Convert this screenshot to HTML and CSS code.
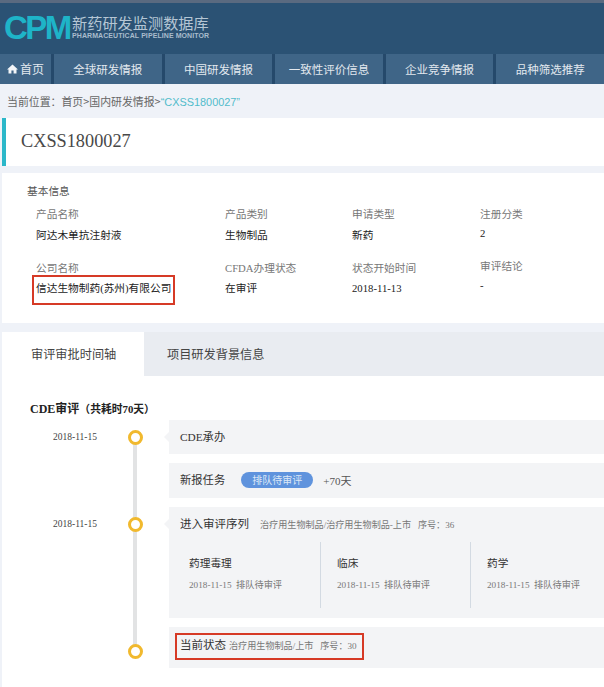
FILE: index.html
```html
<!DOCTYPE html>
<html lang="zh">
<head>
<meta charset="utf-8">
<title>CPM</title>
<link rel="stylesheet" href="styles.css">
</head>
<body>
<header class="brand">
  <span class="logo-mark">CPM</span>
  <div class="logo-text">
    <span class="logo-cn">新药研发监测数据库</span>
    <span class="logo-en">PHARMACEUTICAL PIPELINE MONITOR</span>
  </div>
</header>
<nav class="nav">
  <a class="nav-item nav-home"><svg class="home-icon" viewBox="0 0 12 11"><path d="M6 .5 0 6h1.6v4.500h3.200V7.200h2.400v3.300h3.200V6H12z"/></svg>首页</a>
  <a class="nav-item">全球研发情报</a>
  <a class="nav-item">中国研发情报</a>
  <a class="nav-item">一致性评价信息</a>
  <a class="nav-item">企业竞争情报</a>
  <a class="nav-item">品种筛选推荐</a>
</nav>
<div class="crumbs">当前位置：首页&gt;国内研发情报&gt;<span class="crumb-current">“CXSS1800027”</span></div>
<section class="title-card"><h1>CXSS1800027</h1></section>
<section class="info-card">
  <h2>基本信息</h2>
  <div class="info-grid">
    <div class="cell"><div class="label">产品名称</div><div class="value">阿达木单抗注射液</div></div>
    <div class="cell"><div class="label">产品类别</div><div class="value">生物制品</div></div>
    <div class="cell"><div class="label">申请类型</div><div class="value">新药</div></div>
    <div class="cell cell-tight"><div class="label">注册分类</div><div class="value">2</div></div>
    <div class="cell cell-low"><div class="label">公司名称</div><div class="value flagged">信达生物制药(苏州)有限公司</div></div>
    <div class="cell cell-low"><div class="label">CFDA办理状态</div><div class="value">在审评</div></div>
    <div class="cell cell-low"><div class="label">状态开始时间</div><div class="value">2018-11-13</div></div>
    <div class="cell cell-raised"><div class="label">审评结论</div><div class="value">-</div></div>
  </div>
</section>
<section class="panel">
  <div class="tabs">
    <div class="tab tab-active">审评审批时间轴</div>
    <div class="tab">项目研发背景信息</div>
  </div>
  <div class="timeline-wrap">
    <h3>CDE审评<small>（共耗时70天）</small></h3>
    <div class="timeline">
      <div class="axis"></div>
      <div class="row">
        <div class="date">2018-11-15</div><div class="dot"></div>
        <div class="card card-first notch"><span class="card-title">CDE承办</span></div>
      </div>
      <div class="row">
        <div class="card card-task"><span class="card-title">新报任务</span><span class="pill">排队待审评</span><span class="plus">+70天</span></div>
      </div>
      <div class="row">
        <div class="date">2018-11-15</div><div class="dot"></div>
        <div class="card card-queue notch">
          <div class="queue-head"><span class="card-title strong">进入审评序列</span><span class="meta">治疗用生物制品/治疗用生物制品-上市&nbsp;&nbsp;&nbsp;序号：36</span></div>
          <div class="tracks">
            <div class="track"><div class="track-name">药理毒理</div><div class="track-meta">2018-11-15&nbsp;&nbsp;排队待审评</div></div>
            <div class="track"><div class="track-name">临床</div><div class="track-meta">2018-11-15&nbsp;&nbsp;排队待审评</div></div>
            <div class="track"><div class="track-name">药学</div><div class="track-meta">2018-11-15&nbsp;&nbsp;排队待审评</div></div>
          </div>
        </div>
      </div>
      <div class="row">
        <div class="dot dot-last"></div>
        <div class="card card-now"><div class="now-box"><span class="card-title now-title">当前状态</span><span class="meta">治疗用生物制品/上市&nbsp;&nbsp;&nbsp;序号：30</span></div></div>
      </div>
    </div>
  </div>
</section>
</body>
</html>
```
FILE: styles.css
```css
* { box-sizing: border-box; }
html, body { margin: 0; height: 687px; overflow: hidden; }
body {
  background: #eff2f8;
  font-family: "Liberation Serif", "Noto Sans CJK SC", serif;
  color: #333;
}
.brand {
  height: 54px;
  padding: 10px 0 0 4px;
  border-top: 3px solid #5a6a80;
  background: #2b5274;
  display: flex;
  align-items: flex-start;
}
.logo-mark {
  margin-top: -1px;
  font: bold 33px/32px "Liberation Sans", sans-serif;
  letter-spacing: -2.600px;
  color: #1eb4c8;
  width: 68px;
  flex: none;
}
.logo-text { display: flex; flex-direction: column; }
.logo-cn {
  font: 15.200px/19px "Noto Sans CJK SC", sans-serif;
  color: #b5c6d4;
}
.logo-en {
  font: bold 7px/8px "Liberation Sans", sans-serif;
  letter-spacing: .08px;
  color: #a9bccc;
  white-space: nowrap;
}
.nav { height: 30px; background: #25496b; display: flex; gap: 3px; }
.nav-item {
  flex: 1;
  background: #3f6587;
  color: #e3e9ef;
  font: 11.500px/30px "Noto Sans CJK SC", sans-serif;
  text-align: center;
}
.nav-home {
  flex: 0 0 51px;
  display: flex;
  align-items: center;
  justify-content: center;
  gap: 2px;
  font-size: 12px;
}
.home-icon { width: 11px; height: 10px; fill: #f2f5f8; }
.crumbs {
  height: 34px;
  padding-left: 7px;
  font: 10.900px/34px "Noto Sans CJK SC", sans-serif;
  color: #666;
  white-space: nowrap;
}
.crumb-current { color: #52bccb; font-family: "Liberation Sans", "Noto Sans CJK SC", sans-serif; }
.title-card {
  height: 48px;
  margin-left: 2px;
  background: #fff;
  border-left: 4px solid #2bb7c9;
  padding-left: 15px;
}
.title-card h1 {
  margin: 0;
  font-size: 18.300px;
  font-weight: normal;
  line-height: 47px;
  color: #484848;
}
.info-card {
  height: 150px;
  margin: 7px 0 9px 2px;
  background: #fff;
  padding: 10px 0 0 25px;
}
.info-card h2 { margin: 0; font: 10.700px/16px "Noto Sans CJK SC", sans-serif; color: #555; }
.info-grid {
  display: grid;
  grid-template-columns: 189px 127px 128px 1fr;
  grid-auto-rows: 53px;
  margin: 7px 0 0 9px;
}
.label { height: 16px; font: 10.700px/16px "Liberation Serif", "Noto Sans CJK SC", serif; color: #777; }
.value { position: relative; height: 16px; margin-top: 5px; font: 10.700px/16px "Liberation Serif", "Noto Sans CJK SC", serif; color: #222; white-space: nowrap; }
.cell-tight .value { margin-top: 3px; }
.cell-low { padding-top: 1px; }
.cell-low .value { margin-top: 4px; }
.cell-raised { margin-top: -1px; }
.cell-raised .value { margin-top: 3px; }
.flagged::after {
  content: "";
  box-sizing: border-box;
  position: absolute;
  left: -4px;
  top: -5px;
  width: 143px;
  height: 30px;
  border: 2.500px solid #d63a26;
}
.panel { margin-left: 2px; background: #fff; height: 355px; }
.tabs { display: flex; height: 44px; background: #e9ecf1; }
.tab {
  padding-left: 29px;
  width: 142px;
  font: 12.200px/44px "Noto Sans CJK SC", sans-serif;
  color: #444;
  white-space: nowrap;
}
.tab + .tab { padding-left: 23px; }
.tab-active { background: #fff; }
.timeline-wrap { padding: 25px 0 0 28px; }
h3 { margin: 0; height: 16px; font-size: 12px; line-height: 16px; font-weight: bold; color: #222; }
h3 small { font-size: 10.800px; }
.timeline { position: relative; margin: 3px 0 0 -28px; }
.axis { position: absolute; left: 131px; top: 17px; width: 4px; height: 214px; background: #e2e3e4; }
.row { display: flex; position: relative; margin-bottom: 9px; }
.date {
  position: absolute;
  left: 51px;
  top: 10px;
  font-size: 9.500px;
  line-height: 14px;
  color: #444;
}
.dot {
  position: absolute;
  z-index: 1;
  left: 125.500px;
  top: 9.500px;
  width: 15px;
  height: 15px;
  border: 3.500px solid #f1b92e;
  border-radius: 50%;
  background: #fff;
}
.dot-last { top: 16.500px; }
.card { margin-left: 167px; flex: 1; background: #f3f4f6; position: relative; }
.notch::before {
  content: "";
  position: absolute;
  left: -5px;
  top: 12px;
  border: 5px solid transparent;
  border-left: 0;
  border-right-color: #f3f4f6;
}
.card-first { height: 34px; padding-left: 11px; display: flex; align-items: center; }
.card-task { height: 35px; padding: 0 0 2px 11px; display: flex; align-items: center; }
.card-queue { height: 111px; padding-left: 11px; }
.card-now { height: 41px; padding: 6px 0 0 6px; }
.card-title { font: 11.300px/16px "Liberation Serif", "Noto Sans CJK SC", serif; color: #333; }
.strong { font-size: 11.500px; }
.pill {
  margin-left: 16px;
  height: 16px;
  padding: 0 11px;
  background: #5f93dd;
  border-radius: 8px;
  color: #dde8f7;
  font: 10px/16px "Noto Sans CJK SC", sans-serif;
}
.plus { margin-left: 10px; font-size: 11px; color: #555; }
.queue-head { padding-top: 7px; height: 35px; line-height: 18px; }
.meta { margin-left: 11px; font: 9.100px/16px "Liberation Serif", "Noto Sans CJK SC", serif; color: #777; }
.tracks { display: flex; margin-left: -11px; height: 66px; }
.track { padding: 13px 0 0 20px; width: 152px; border-right: 1px solid #d3dae2; }
.track + .track { width: 150px; padding-left: 16px; }
.track:last-child { border: 0; flex: 1; }
.track-name { font: 10.700px/16px "Liberation Serif", "Noto Sans CJK SC", serif; color: #333; }
.track-meta { margin-top: 7px; font: 9.200px/14px "Liberation Serif", "Noto Sans CJK SC", serif; color: #777; white-space: nowrap; }
.now-box {
  width: 189px;
  height: 27px;
  padding-left: 3px;
  border: 2.500px solid #d63a26;
  line-height: 18px;
  white-space: nowrap;
}
.now-title { font-size: 11.500px; }
.now-box .meta { margin-left: 3px; }
```
